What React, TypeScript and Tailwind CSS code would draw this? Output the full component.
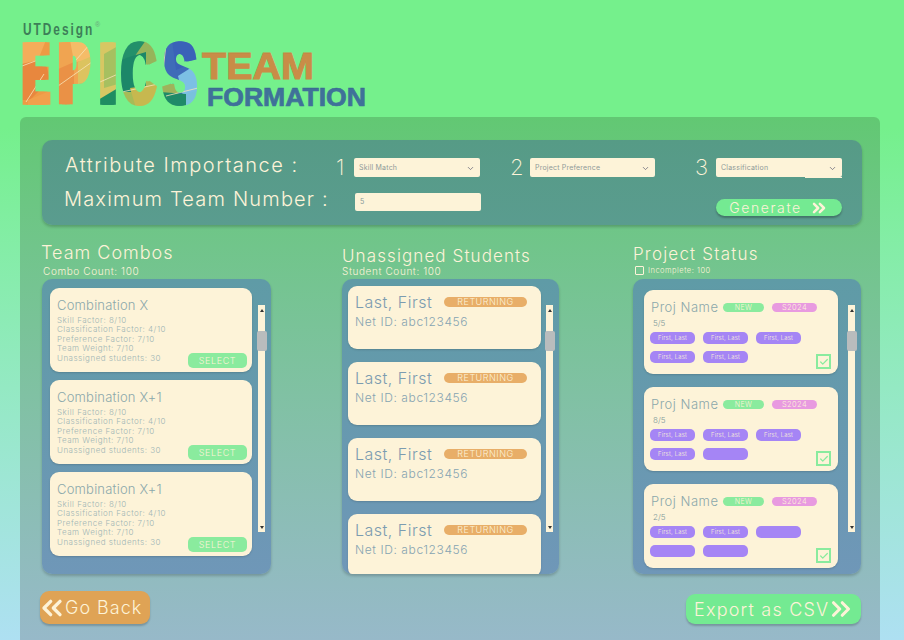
import { ChevronDown, ChevronsLeft, ChevronsRight, Check } from 'lucide-react'

const FACTORS = ['Skill Factor: 8/10', 'Classification Factor: 4/10', 'Preference Factor: 7/10', 'Team Weight: 7/10', 'Unassigned students: 30']

// Faceted colours of the logo letters: [points, fill]
const FACETS: [string, string][] = [
  ['20,40 58,40 58,108 20,108', '#ee9a45'],
  ['22,62 44,56 50,80 30,100 22,100', '#e8873e'],
  ['22,40 46,40 38,60 22,64', '#f4ad5a'],
  ['28,100 52,90 52,108 28,108', '#f1a04c'],
  ['56,40 97,40 97,108 56,108', '#f0a451'],
  ['56,70 74,62 74,108 56,108', '#ea9146'],
  ['70,40 97,40 97,60 74,62', '#f5bc68'],
  ['78,62 97,54 97,80 78,84', '#dcc35f'],
  ['98,40 118,40 118,108 98,108', '#d7c763'],
  ['104,54 118,46 118,84 104,88', '#a6c060'],
  ['98,100 118,88 118,108 98,108', '#1f8d62'],
  ['119,40 160,40 160,108 119,108', '#a7bb57'],
  ['119,40 146,40 146,54 119,60', '#23906a'],
  ['146,40 160,40 160,66 128,66', '#96b45a'],
  ['119,60 146,52 146,92 119,92', '#1c8768'],
  ['130,88 160,84 160,108 136,108', '#c7b84f'],
  ['160,40 200,40 200,108 160,108', '#3f6cb8'],
  ['172,40 200,40 200,60 176,70', '#3a62b8'],
  ['178,76 200,62 200,100 184,100', '#7cc0e4'],
  ['160,84 184,84 176,96 160,92', '#9fb35b'],
  ['160,92 186,94 186,108 160,108', '#1f8a68'],
  ['186,94 200,90 200,108 186,108', '#79c2dc'],
]

const LETTERS = [
  { ch: 'E', x: 21, len: 24, spread: 6 },
  { ch: 'P', x: 57, len: 28, spread: 6 },
  { ch: 'I', x: 97, len: 19, spread: 3 },
  { ch: 'C', x: 120, len: 34, spread: 3 },
  { ch: 'S', x: 162, len: 33, spread: 3 },
]

function Logo() {
  return (
    <svg width="380" height="117" viewBox="0 0 380 117" className="block">
      <defs>
        <mask id="epics">
          <g fill="white" stroke="white" strokeWidth="3.5" fontFamily="Liberation Sans" fontWeight="700" fontSize="86">
            {LETTERS.flatMap((l) =>
              [0, 0.5, 1].map((t) => (
                <text key={l.ch + t} x={l.x + t * l.spread} y="102.5" textLength={l.len} lengthAdjust="spacingAndGlyphs">{l.ch}</text>
              )),
            )}
          </g>
        </mask>
        <linearGradient id="team" x1="0" y1="0" x2="0" y2="1">
          <stop offset="0.12" stopColor="#8f6a3a" />
          <stop offset="0.2" stopColor="#c98c47" />
        </linearGradient>
        <linearGradient id="formation" x1="0" y1="0" x2="0" y2="1">
          <stop offset="0.14" stopColor="#2c5a72" />
          <stop offset="0.24" stopColor="#3f7199" />
        </linearGradient>
      </defs>
      <g mask="url(#epics)">
        {FACETS.map(([points, fill]) => (
          <polygon key={points} points={points} fill={fill} />
        ))}
        <path d="M22 66 38 60M26 102 44 74M58 86 92 62M76 60 90 44M100 82 118 74M122 92 158 84M166 44 162 80M166 96 198 88" stroke="#f7e3b8" strokeWidth="0.8" fill="none" />
      </g>
      <text transform="translate(23 34.5) scale(0.7 1)" fontFamily="Liberation Sans" fontWeight="700" fontSize="17" fill="#3d7f58" textLength="99" lengthAdjust="spacing">UTDesign</text>
      <text x="95" y="27" fontFamily="Liberation Sans" fontSize="7" fill="#6aa87c">®</text>
      <text x="202" y="79" fontFamily="Liberation Sans" fontWeight="700" fontSize="37" fill="url(#team)" stroke="#c98c47" strokeWidth="1" textLength="112" lengthAdjust="spacingAndGlyphs">TEAM</text>
      <text x="207" y="105.5" fontFamily="Liberation Sans" fontWeight="700" fontSize="25" fill="url(#formation)" stroke="#3f7199" strokeWidth="0.7" textLength="159" lengthAdjust="spacingAndGlyphs">FORMATION</text>
    </svg>
  )
}

function Scrollbar() {
  return (
    <div className="relative w-[7px] h-[227px] bg-[#fdf3d8] shrink-0">
      <span className="absolute top-[4px] left-[2px] border-x-[2px] border-b-[3px] border-x-transparent border-b-[#333]" />
      <span className="absolute top-[26px] -left-[1px] w-[10px] h-[20px] rounded-[2px] bg-[#b9bcbd]" />
      <span className="absolute bottom-[3px] left-[2px] border-x-[2px] border-t-[3px] border-x-transparent border-t-[#333]" />
    </div>
  )
}

function Select({ label, className }: { label: string; className: string }) {
  return (
    <div className={`flex items-center justify-between h-[19px] rounded-[2px] bg-[#fdf3d8] pl-[5px] pr-[5px] pt-[1px] text-[7px] tracking-[0.2px] font-normal text-[#8f9a98] ${className}`}>
      {label}
      <ChevronDown size={9} className="text-[#667]" />
    </div>
  )
}

function ComboCard({ title }: { title: string }) {
  return (
    <div className="relative h-[84px] rounded-[9px] bg-[#fdf3d8] pl-[7px] pt-[10px] shadow-[0_1px_2px_rgba(0,0,0,0.15)]">
      <p className="text-[13px] leading-[14px] text-[#8ba8ab] tracking-[0.2px]">{title}</p>
      <div className="mt-[4px] text-[8px] leading-[9.4px] text-[#9db5b5] tracking-[0.5px]">
        {FACTORS.map((f) => (
          <p key={f}>{f}</p>
        ))}
      </div>
      <button className="absolute right-[5px] bottom-[4px] w-[59px] h-[15px] rounded-[5px] bg-[#8aeb9e] text-[9px] leading-[15px] tracking-[0.6px] text-[#fdf3d8]">SELECT</button>
    </div>
  )
}

function StudentCard() {
  return (
    <div className="h-[63px] shrink-0 rounded-[9px] bg-[#fdf3d8] pl-[7px] pt-[7px] shadow-[0_1px_2px_rgba(0,0,0,0.15)]">
      <div className="flex items-center">
        <p className="text-[16px] leading-[18px] text-[#7c9cb0] tracking-[0.5px] w-[89px]">Last, First</p>
        <span className="w-[83px] h-[10px] rounded-full bg-[#e8ae68] text-center text-[9px] leading-[10px] tracking-[0.5px] text-[#fdf3d8]">RETURNING</span>
      </div>
      <p className="mt-[3px] text-[12px] leading-[16px] text-[#86a4b2] tracking-[0.6px]">Net ID: abc123456</p>
    </div>
  )
}

function ProjectCard({ count, filled }: { count: string; filled: number }) {
  return (
    <div className="relative h-[84px] rounded-[9px] bg-[#fdf3d8] pl-[6px] pt-[10px] shadow-[0_1px_2px_rgba(0,0,0,0.15)]">
      <div className="flex items-center pl-[1px]">
        <p className="w-[72px] text-[13px] leading-[14px] text-[#8ba8ab] tracking-[0.5px]">Proj Name</p>
        <span className="w-[41px] h-[9px] rounded-full bg-[#8aeb9e] text-center text-[7px] leading-[9px] tracking-[0.4px] text-[#fdf3d8]">NEW</span>
        <span className="ml-[8px] w-[45px] h-[9px] rounded-full bg-[#e89ae0] text-center text-[7.5px] leading-[9px] tracking-[0.4px] text-[#fdf3d8]">S2024</span>
      </div>
      <p className="mt-[4px] pl-[3px] text-[8px] leading-[10px] text-[#7d9a9a]">{count}</p>
      <div className="mt-[4px] grid grid-cols-[45px_45px_45px] gap-x-[8px] gap-y-[7px]">
        {[0, 1, 2, 3, 4].map((i) => (
          <span key={i} className="h-[12px] rounded-[5px] bg-[#a585f5] text-center text-[6px] leading-[12px] tracking-[0.2px] text-[#fdf3d8]">
            {i < filled ? 'First, Last' : ''}
          </span>
        ))}
      </div>
      <span className="absolute right-[7px] bottom-[5px] flex items-center justify-center w-[15px] h-[15px] border-2 border-[#8aeb9e]">
        <Check size={10} strokeWidth={3} className="text-[#8aeb9e]" />
      </span>
    </div>
  )
}

export default function App() {
  return (
    <div className="w-[904px] h-[640px] overflow-hidden flex flex-col bg-gradient-to-b from-[#75f08c] from-20% to-[#aee0f2] font-['Inter',sans-serif] font-light">
      <header className="h-[117px] shrink-0">
        <Logo />
      </header>
      <main className="flex-1 ml-[20px] w-[860px] rounded-t-[6px] bg-gradient-to-b from-[#62c873] to-[#97b9c9] px-[22px] pt-[23px]">
        {/* settings */}
        <section className="h-[85px] w-[820px] rounded-[10px] bg-gradient-to-b from-[#569b86] to-[#5a9c8f] shadow-[0_2px_3px_rgba(0,0,0,0.2)] text-[#fdf3d8]">
          <div className="flex items-center pt-[18px] pl-[23px]">
            <p className="w-[271px] -mt-[4px] text-[20px] leading-[19px] tracking-[1.5px]">Attribute Importance :</p>
            <span className="w-[18px] text-[22px] leading-[19px] font-extralight">1</span>
            <Select label="Skill Match" className="w-[126px]" />
            <span className="ml-[30px] w-[20px] text-[22px] leading-[19px] font-extralight">2</span>
            <Select label="Project Preference" className="w-[125px] pl-[4px]" />
            <span className="ml-[40px] w-[21px] text-[22px] leading-[19px] font-extralight">3</span>
            <div className="relative">
              <Select label="Classification" className="w-[126px]" />
              <span className="absolute right-0 -bottom-[1px] w-[37px] h-[1px] bg-[#fdf3d8]" />
            </div>
          </div>
          <div className="flex items-start pt-[16px] pl-[22px]">
            <p className="w-[291px] -mt-[3px] text-[20px] leading-[18px] tracking-[1.18px]">Maximum Team Number :</p>
            <div className="w-[126px] h-[18px] rounded-[2px] bg-[#fdf3d8] pl-[5px] text-[7px] leading-[18px] font-normal text-[#8a9a98]">5</div>
            <button className="ml-[235px] mt-[6px] flex items-center justify-center gap-[7px] w-[126px] h-[17px] rounded-full bg-[#74ea92] text-[14px] tracking-[1.6px] text-[#fdf3d8] shadow-[0_2px_2px_rgba(0,0,0,0.25)]">
              Generate
              <ChevronsRight size={20} strokeWidth={3} />
            </button>
          </div>
        </section>

        {/* columns */}
        <section className="flex w-[819px] mt-[17px] text-[#fdf3d8]">
          <div className="w-[229px] shrink-0">
            <h2 className="-ml-[1px] h-[21px] text-[18px] leading-[21px] tracking-[1px]">Team Combos</h2>
            <p className="mt-[2px] ml-[1px] text-[10px] leading-[13px] tracking-[0.6px]">Combo Count: 100</p>
            <div className="mt-[1px] flex items-start gap-[6px] h-[295px] rounded-[10px] bg-gradient-to-b from-[#5f9ba6] to-[#6f97b8] pl-[8px] pt-[9px] shadow-[0_2px_3px_rgba(0,0,0,0.2)] overflow-hidden">
              <div className="w-[202px] flex flex-col gap-[8px]">
                <ComboCard title="Combination X" />
                <ComboCard title="Combination X+1" />
                <ComboCard title="Combination X+1" />
              </div>
              <div className="mt-[17px]"><Scrollbar /></div>
            </div>
          </div>

          <div className="ml-[71px] w-[217px] shrink-0">
            <h2 className="mt-[4px] h-[20px] text-[17px] leading-[20px] tracking-[1.1px]">Unassigned Students</h2>
            <p className="-mt-[1px] text-[10px] leading-[12px] tracking-[0.6px]">Student Count: 100</p>
            <div className="mt-[2px] flex items-start gap-[5px] h-[295px] rounded-[10px] bg-gradient-to-b from-[#5f9ba6] to-[#6f97b8] pl-[6px] pt-[7px] shadow-[0_2px_3px_rgba(0,0,0,0.2)] overflow-hidden">
              <div className="w-[193px] flex flex-col gap-[13px]">
                <StudentCard />
                <StudentCard />
                <StudentCard />
                <StudentCard />
              </div>
              <div className="mt-[19px]"><Scrollbar /></div>
            </div>
          </div>

          <div className="ml-[74px] w-[228px] shrink-0">
            <h2 className="mt-[2px] h-[20px] text-[17px] leading-[20px] tracking-[1.2px]">Project Status</h2>
            <div className="ml-[2px] flex items-center gap-[4px] h-[13px]">
              <span className="w-[9px] h-[9px] rounded-[1px] border border-[#fdf3d8]" />
              <p className="text-[7.5px] tracking-[0.5px]">Incomplete: 100</p>
            </div>
            <div className="mt-[2px] flex items-start gap-[10px] h-[295px] rounded-[10px] bg-gradient-to-b from-[#5f9ba6] to-[#6f97b8] pl-[11px] pt-[11px] shadow-[0_2px_3px_rgba(0,0,0,0.2)] overflow-hidden">
              <div className="w-[194px] flex flex-col gap-[13px]">
                <ProjectCard count="5/5" filled={5} />
                <ProjectCard count="8/5" filled={4} />
                <ProjectCard count="2/5" filled={2} />
              </div>
              <div className="mt-[15px]"><Scrollbar /></div>
            </div>
          </div>
        </section>

        {/* footer actions */}
        <section className="flex items-start justify-between w-[819px] mt-[17px] text-[#fdf3d8]">
          <button className="-ml-[2px] flex items-center w-[110px] h-[33px] rounded-[9px] bg-[#dfa355] text-[18px] tracking-[1px] shadow-[0_2px_2px_rgba(0,0,0,0.2)]">
            <ChevronsLeft size={32} strokeWidth={2.5} className="-ml-[4px] -mr-[3px]" />
            Go Back
          </button>
          <button className="mt-[3px] flex items-center pl-[8px] w-[175px] h-[30px] rounded-[9px] bg-[#74ea92] text-[18px] tracking-[1.2px] shadow-[0_2px_2px_rgba(0,0,0,0.2)]">
            Export as CSV
            <ChevronsRight size={30} strokeWidth={2.5} className="-ml-[3px]" />
          </button>
        </section>
      </main>
    </div>
  )
}
